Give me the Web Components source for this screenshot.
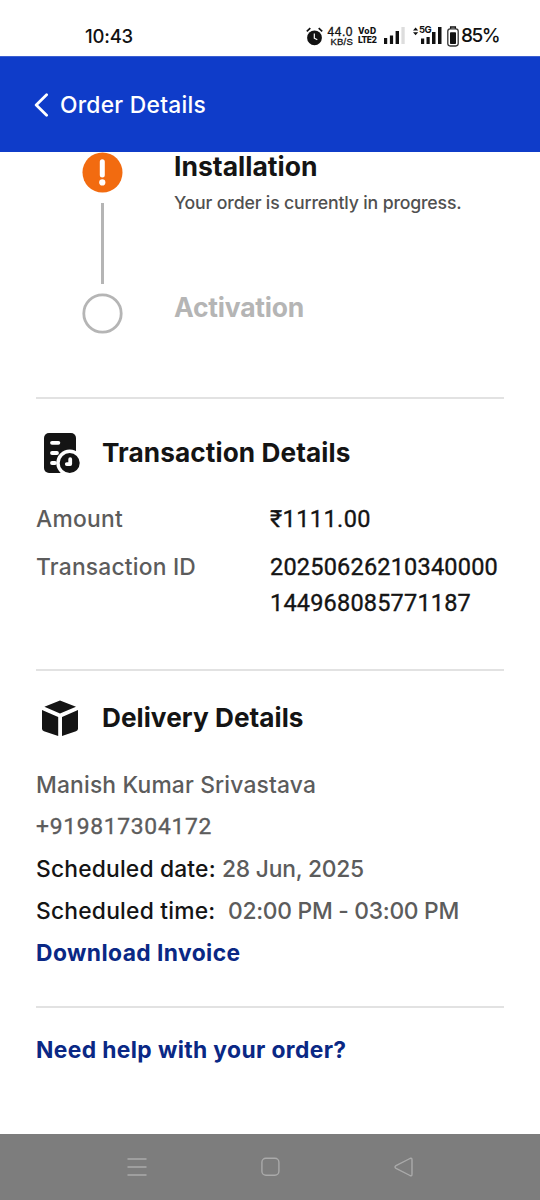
<!DOCTYPE html>
<html lang="en">
<head>
<meta charset="utf-8">
<title>Order Details</title>
<style>
body{margin:0;background:#fff;font-family:Inter,"Liberation Sans",sans-serif;color:#141414}
</style>
</head>
<body>
<order-screen></order-screen>
<script>
const define = (name, html, ready) => customElements.define(name, class extends HTMLElement {
  constructor() {
    super();
    const t = document.createElement('template');
    t.innerHTML = html;
    this.attachShadow({mode: 'open'}).append(t.content.cloneNode(true));
  }
  connectedCallback() { if (ready) ready(this); }
});

/* One line of text, tracked so that it spans a given width. */
define('tracked-text', `<style>
:host{display:inline-block;white-space:pre;flex:none}
span{display:inline-block}
:host([digits]){font-family:Roboto,Inter,sans-serif;font-weight:400;-webkit-text-stroke:.35px currentColor}
</style><span><slot></slot></span>`, el => {
  const span = el.shadowRoot.querySelector('span');
  const target = +el.getAttribute('w');
  const n = el.textContent.length;
  const natural = span.getBoundingClientRect().width;
  if (target && natural) span.style.letterSpacing = ((target - natural) / n) + 'px';
});

define('status-bar', `<style>
:host{display:flex;height:56px;box-sizing:border-box;padding:16px 41px 0 85px;justify-content:space-between;align-items:center;color:#111}
.time{font-size:18.5px;line-height:24px;font-weight:450}
.right{display:flex;align-items:center;height:40px}
.right svg{display:block;flex:none}
.two{display:flex;flex-direction:column;align-items:flex-end}
.rate{width:26px;margin-left:4px;font:500 12px/10px "Liberation Sans",sans-serif;-webkit-text-stroke:.3px currentColor}
.rate .b{font-size:9.5px;line-height:9px}
.volte{width:19px;margin-left:5px;align-items:flex-start;font-size:8.5px;line-height:9px;font-weight:800}
.cell{display:grid;width:29px;height:22px;margin-left:8px}
.cell>*{grid-area:1/1}
.g{font-size:9.5px;line-height:10px;font-weight:700;padding-left:6px}
.bat{font-size:19px;line-height:24px;font-weight:450;margin-left:2px}
</style>
<div class="time"><tracked-text w="48">10:43</tracked-text></div>
<div class="right">
<svg width="17" height="19" viewBox="0 0 17 19"><circle cx="8.5" cy="10.8" r="7.4" fill="#111"/><path d="M.8 4.4 4.3 1.2M16.2 4.4 12.7 1.2" stroke="#111" stroke-width="1.7"/><path d="M8.3 6.6v4.6l3 1.5" fill="none" stroke="#fff" stroke-width="1.2"/></svg>
<div class="two rate"><tracked-text w="25.5">44.0</tracked-text><tracked-text class="b" w="22.5">KB/S</tracked-text></div>
<div class="two volte"><tracked-text w="18.5">VoD</tracked-text><tracked-text w="18.5">LTE2</tracked-text></div>
<svg style="margin-left:7px" width="21" height="18" viewBox="0 0 21 18"><path d="M0 11h3.2v6H0zM5.9 8.5h3.2V17H5.9zM11.6 4h3.4v13h-3.4z" fill="#111"/><path d="M17.4 0h3.3v17h-3.3z" fill="#ddd"/></svg>
<div class="cell"><svg width="29" height="22" viewBox="0 0 29 22"><path d="M0 5.5 2.6 2.5l2.6 3zM0 7.3l2.6 3 2.6-3zM8 13.5h3.2v5.5H8zM13.5 12h3.2v7h-3.2zM19 7h3.5v12H19zM25 2h3.5v17H25z" fill="#111"/></svg><span class="g"><tracked-text w="12">5G</tracked-text></span></div>
<svg style="margin-left:5px" width="12" height="21" viewBox="0 0 12 21"><path d="M3.6 3V1h4.8v2" fill="none" stroke="#111" stroke-width="1.3"/><rect x=".8" y="2.8" width="10.4" height="17.2" rx="2.4" fill="none" stroke="#333" stroke-width="1.3"/><rect x="3" y="6.2" width="6" height="11.8" rx=".8" fill="#111"/></svg>
<div class="bat"><tracked-text w="38">85%</tracked-text></div>
</div>`);

define('app-bar', `<style>
:host{display:flex;height:96px;background:#0f3cc9;border-top:1px solid #3c5fd0;box-sizing:border-box;color:#fff;align-items:center;padding-left:34px;gap:11px}
svg{display:block}
div{font-size:22.8px;font-weight:500;line-height:28px}
</style>
<svg width="15" height="24" viewBox="0 0 15 24"><path d="M12.6 1.8 2.2 12l10.4 10.3" fill="none" stroke="#fff" stroke-width="2.8" stroke-linecap="round" stroke-linejoin="round"/></svg>
<div><tracked-text w="146">Order Details</tracked-text></div>`);

define('order-step', `<style>
:host{display:grid;grid-template-columns:40px 1fr;column-gap:52px;padding-left:46px}
.rail{display:flex;flex-direction:column;align-items:center;gap:10px}
svg{display:block}
i{display:none;width:3px;height:81px;background:#b5b5b5}
:host([active]) i{display:block}
.title{font-size:26.5px;line-height:32px;font-weight:700;margin-top:-2px}
:host(:not([active])) .title{color:#b5b5b5}
.note{font-size:17.7px;line-height:24px;font-weight:450;color:#505050;margin-top:9px}
</style><div class="rail"><slot name="mark"></slot><i></i></div><div><div class="title"><slot></slot></div><div class="note"><slot name="note"></slot></div></div>`);

define('detail-section', `<style>
:host{display:block;border-top:2px solid #e2e2e2}
header{display:flex;align-items:center;height:46px;padding-top:31px;padding-left:4px;gap:21px;font-size:26.2px;line-height:32px;font-weight:650}
:host([tight]) header{padding-top:24px}
</style><header><slot name="icon"></slot><slot name="title"></slot></header><slot></slot>`);

define('detail-row', `<style>
:host{display:grid;grid-template-columns:234px 1fr;font-size:22.8px;line-height:36px;font-weight:450;color:#141414}
.k{color:#5c5c5c}
.v{display:flex;flex-direction:column;align-items:flex-start;font-size:23.5px}
</style><div class="k"><slot name="k"></slot></div><div class="v"><slot></slot></div>`);

define('system-nav', `<style>
:host{display:grid;grid-template-columns:repeat(3,1fr);height:66px;background:#7d7d7d;align-items:center;justify-items:center;padding:0 69px 0 70px}
svg{display:block}
path,rect{fill:none;stroke:#aaa;stroke-width:1.4;stroke-linejoin:round}
</style>
<svg width="20" height="20" viewBox="0 0 20 20"><path d="M.5 2h19M.5 10h19M.5 18h19"/></svg>
<svg width="20" height="20" viewBox="0 0 20 20"><rect x="1.9" y="1.2" width="17" height="17" rx="4"/></svg>
<svg width="20" height="20" viewBox="0 0 20 20"><path d="M2 8.7 16 1.5q2-.8 2 1.2v14.6q0 2-2 1.2L2 11.3q-2-1.3 0-2.6z"/></svg>`);

define('order-screen', `<style>
:host{display:flex;flex-direction:column;width:540px;height:1200px;overflow:hidden;background:#fff}
main{flex:1;padding:0 36px;min-height:0}
order-step[active]{height:141px}
.steps{height:245px}
.tx{height:270px}
.dl{height:335px}
.rows{padding-top:25px;display:flex;flex-direction:column;gap:12px}
.lines{padding-top:23px;font-size:22.8px;line-height:42px;font-weight:450;color:#5c5c5c}
.lines>div{height:42px;white-space:nowrap;display:flex;align-items:center}
.lines b{font-weight:500;color:#141414;display:flex}
.lines .link,.help{color:#0a2885;font-weight:650;font-size:22.8px}
.help{border-top:2px solid #e2e2e2;padding-top:26px;line-height:32px}
svg{display:block}
</style>
<status-bar></status-bar>
<app-bar></app-bar>
<main>
<div class="steps">
<order-step active><svg slot="mark" width="41" height="41" viewBox="0 0 41 41"><circle cx="20.5" cy="20.5" r="20" fill="#f26b10"/><path d="M20.3 9.7v13.2" stroke="#fff" stroke-width="5" stroke-linecap="round"/><circle cx="20.3" cy="30.4" r="3.1" fill="#fff"/></svg><tracked-text w="143.5">Installation</tracked-text><tracked-text slot="note" w="287.5">Your order is currently in progress.</tracked-text></order-step>
<order-step><svg slot="mark" width="41" height="41" viewBox="0 0 41 41"><circle cx="20.5" cy="20.5" r="18.7" fill="none" stroke="#b5b5b5" stroke-width="2.8"/></svg><tracked-text w="130">Activation</tracked-text></order-step>
</div>
<detail-section class="tx">
<svg slot="icon" width="41" height="42" viewBox="0 0 41 42"><rect x="4" y="1" width="32" height="40" rx="5" fill="#141414"/><path d="M12 10.8h6.4M12 21h5M12 31h3" stroke="#fff" stroke-width="3.8" stroke-linecap="round"/><circle cx="29.7" cy="31" r="13.4" fill="#fff"/><circle cx="29.7" cy="31" r="10" fill="#141414"/><path d="M30.2 27.2v4.9h-3.4" fill="none" stroke="#fff" stroke-width="3.8" stroke-linecap="round" stroke-linejoin="round"/></svg>
<tracked-text slot="title" w="248.5">Transaction Details</tracked-text>
<div class="rows">
<detail-row><tracked-text slot="k" w="87">Amount</tracked-text><tracked-text digits w="101">₹1111.00</tracked-text></detail-row>
<detail-row><tracked-text slot="k" w="160">Transaction ID</tracked-text><tracked-text digits w="228">20250626210340000</tracked-text><tracked-text digits w="201">144968085771187</tracked-text></detail-row>
</div>
</detail-section>
<detail-section tight class="dl">
<svg slot="icon" width="41" height="40" viewBox="0 0 41 40"><path d="M20 2.5 36 8.8 20 15.6 4.4 8.8z M2 12l16.2 6.9V38L4 33.2q-2-.8-2-2.5z M22 18.9 38 12v18.7q0 1.7-2 2.5L22 38z" fill="#141414"/></svg>
<tracked-text slot="title" w="201.5">Delivery Details</tracked-text>
<div class="lines">
<div><tracked-text w="280">Manish Kumar Srivastava</tracked-text></div>
<div><tracked-text digits w="176">+919817304172</tracked-text></div>
<div><b><tracked-text w="186">Scheduled date: </tracked-text></b><tracked-text w="142">28 Jun, 2025</tracked-text></div>
<div><b><tracked-text w="192">Scheduled time:  </tracked-text></b><tracked-text w="231">02:00 PM - 03:00 PM</tracked-text></div>
<div class="link"><tracked-text w="204.5">Download Invoice</tracked-text></div>
</div>
</detail-section>
<div class="help"><tracked-text w="310.5">Need help with your order?</tracked-text></div>
</main>
<system-nav></system-nav>`);
</script>
</body>
</html>
